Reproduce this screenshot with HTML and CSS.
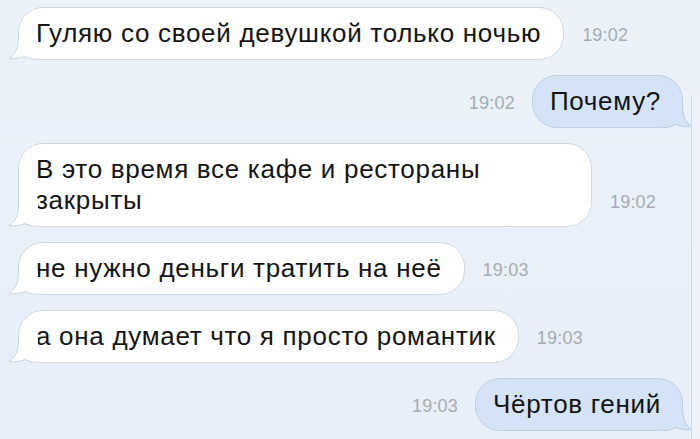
FILE: index.html
```html
<!DOCTYPE html>
<html lang="ru">
<head>
<meta charset="utf-8">
<title>Чат</title>
<link rel="stylesheet" href="styles.css">
</head>
<body>
<div class="screen">
  <div class="chat">
    <div class="row in">
      <div class="bubble">Гуляю со своей девушкой только ночью<svg class="tail" viewBox="0 0 30 24" width="30" height="24"><path class="tf" d="M10.5 0 C10.5 12 8 18 1 22.5 C6 23.3 12 22.5 17 20.5 C22 23 26 23.5 30 23.5 L30 0 Z"/><path class="ts" d="M10.5 0 C10.5 12 8 18 1 22.5 C6 23.3 12 22.5 17 20.5 C22 23 26 23.5 30 23.5"/></svg></div>
      <span class="time">19:02</span>
    </div>
    <div class="row out">
      <span class="time">19:02</span>
      <div class="bubble">Почему?<svg class="tail" viewBox="0 0 30 24" width="30" height="24"><path class="tf" d="M19.5 0 C19.5 12 22 18 29 22.5 C24 23.3 18 22.5 13 20.5 C8 23 4 23.5 0 23.5 L0 0 Z"/><path class="ts" d="M19.5 0 C19.5 12 22 18 29 22.5 C24 23.3 18 22.5 13 20.5 C8 23 4 23.5 0 23.5"/></svg></div>
    </div>
    <div class="row in">
      <div class="bubble wide">В это время все кафе и рестораны закрыты<svg class="tail" viewBox="0 0 30 24" width="30" height="24"><path class="tf" d="M10.5 0 C10.5 12 8 18 1 22.5 C6 23.3 12 22.5 17 20.5 C22 23 26 23.5 30 23.5 L30 0 Z"/><path class="ts" d="M10.5 0 C10.5 12 8 18 1 22.5 C6 23.3 12 22.5 17 20.5 C22 23 26 23.5 30 23.5"/></svg></div>
      <span class="time">19:02</span>
    </div>
    <div class="row in">
      <div class="bubble">не нужно деньги тратить на неё<svg class="tail" viewBox="0 0 30 24" width="30" height="24"><path class="tf" d="M10.5 0 C10.5 12 8 18 1 22.5 C6 23.3 12 22.5 17 20.5 C22 23 26 23.5 30 23.5 L30 0 Z"/><path class="ts" d="M10.5 0 C10.5 12 8 18 1 22.5 C6 23.3 12 22.5 17 20.5 C22 23 26 23.5 30 23.5"/></svg></div>
      <span class="time">19:03</span>
    </div>
    <div class="row in">
      <div class="bubble">а она думает что я просто романтик<svg class="tail" viewBox="0 0 30 24" width="30" height="24"><path class="tf" d="M10.5 0 C10.5 12 8 18 1 22.5 C6 23.3 12 22.5 17 20.5 C22 23 26 23.5 30 23.5 L30 0 Z"/><path class="ts" d="M10.5 0 C10.5 12 8 18 1 22.5 C6 23.3 12 22.5 17 20.5 C22 23 26 23.5 30 23.5"/></svg></div>
      <span class="time">19:03</span>
    </div>
    <div class="row out">
      <span class="time">19:03</span>
      <div class="bubble">Чёртов гений<svg class="tail" viewBox="0 0 30 24" width="30" height="24"><path class="tf" d="M19.5 0 C19.5 12 22 18 29 22.5 C24 23.3 18 22.5 13 20.5 C8 23 4 23.5 0 23.5 L0 0 Z"/><path class="ts" d="M19.5 0 C19.5 12 22 18 29 22.5 C24 23.3 18 22.5 13 20.5 C8 23 4 23.5 0 23.5"/></svg></div>
    </div>
  </div>
</div>
</body>
</html>
```
FILE: styles.css
```css
html, body {
  margin: 0;
  padding: 0;
}
body {
  background: #e9f0f8;
  font-family: "Liberation Sans", Arial, sans-serif;
  color: #141414;
}
.screen {
  position: relative;
  width: 700px;
  height: 439px;
  overflow: hidden;
  background: linear-gradient(to bottom, #ecf2fa, #e8eff8);
}
.screen::after {
  content: "";
  position: absolute;
  left: 691px;
  top: 95px;
  bottom: 0;
  width: 9px;
  border-left: 1px solid #d3d9e0;
  background: #eef3f9;
}
.chat {
  display: flex;
  flex-direction: column;
  gap: 15px;
  padding: 7px 17px 0 18px;
}
.row {
  display: flex;
  align-items: flex-end;
}
.row.out {
  justify-content: flex-end;
}
.bubble {
  position: relative;
  font-size: 26px;
  line-height: 31px;
  letter-spacing: 0.7px;
  padding: 10px 22px 10px 17px;
  border-radius: 25px;
  border: 1px solid #d3d8df;
  background: #ffffff;
  max-width: 533px;
}
.bubble.wide {
  width: 533px;
}
.out .bubble {
  background: #d4e3f6;
  border-color: #bfcfe2;
  padding: 10px 21px 10px 17px;
}
.tail {
  position: absolute;
  bottom: -1px;
  display: block;
  overflow: visible;
}
.in .tail {
  left: -11px;
}
.out .tail {
  right: -11px;
}
.tf {
  fill: #ffffff;
}
.ts {
  fill: none;
  stroke: #d0d6de;
  stroke-width: 1;
}
.out .tf {
  fill: #d4e3f6;
}
.out .ts {
  stroke: #bccbdd;
}
.time {
  font-size: 18px;
  color: #a6acb3;
  margin-bottom: 14px;
  letter-spacing: 0.2px;
}
.in .time {
  margin-left: 18px;
}
.out .time {
  margin-right: 17px;
}
```
